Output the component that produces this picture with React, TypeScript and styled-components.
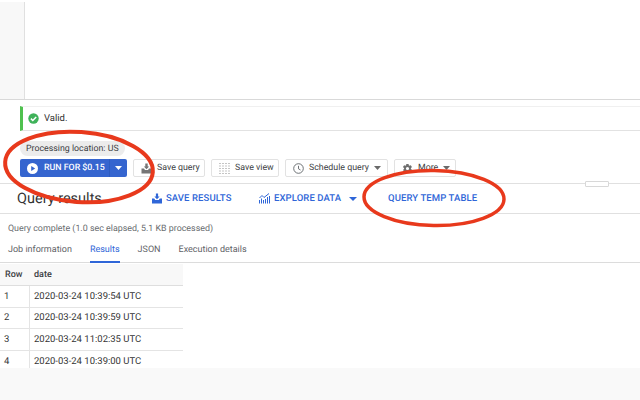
import React from 'react';
import styled, { createGlobalStyle } from 'styled-components';

const Global = createGlobalStyle`
  html, body { margin: 0; padding: 0; background: #fff; }
  body {
    font-family: Roboto, "Liberation Sans", sans-serif;
    color: #3c4043;
    text-rendering: geometricPrecision;
  }
`;

const Page = styled.div`
  position: relative;
  width: 640px;
  height: 400px;
  overflow: hidden;
  background: #fff;
  display: flex;
  flex-direction: column;
`;

const Editor = styled.div`
  height: 100px;
  flex: none;
  box-sizing: border-box;
  border-bottom: 1px solid #d9d9d9;
  display: flex;
  padding-top: 2px;
`;

const Gutter = styled.div`
  width: 24px;
  background: #f8f8f8;
  border-right: 1px solid #e0e0e0;
`;

const ValidBar = styled.div`
  margin: 6px 0 0 20px;
  height: 25px;
  box-sizing: border-box;
  flex: none;
  display: flex;
  align-items: center;
  gap: 5px;
  padding-left: 5px;
  border-left: 3px solid #4fc14f;
  border-top: 1px solid #f0f0f0;
  border-bottom: 1px solid #e2e2e2;
  font-size: 9.5px;
  color: #333;
`;

const Chip = styled.div`
  margin: 10px 0 0 20px;
  width: 105px;
  height: 15px;
  flex: none;
  box-sizing: border-box;
  padding-left: 6px;
  border-radius: 8px;
  background: #ececec;
  font-size: 8.8px;
  line-height: 16px;
  color: #3c4043;
  white-space: nowrap;
`;

const Toolbar = styled.div`
  margin: 3px 0 0 20px;
  height: 18px;
  flex: none;
  display: flex;
  gap: 6px;
`;

const RunButton = styled.div`
  width: 107px;
  flex: none;
  display: flex;
  align-items: center;
  background: #3565cf;
  border-radius: 2px;
  color: #fff;
  font-size: 8.8px;
  font-weight: 500;
`;

const RunLabel = styled.div`
  width: 90px;
  height: 100%;
  box-sizing: border-box;
  display: flex;
  align-items: center;
  gap: 6px;
  padding-left: 7px;
  border-right: 1px solid #2d5cc0;
  white-space: nowrap;
`;

const RunCaret = styled.div`
  flex: 1;
  display: flex;
  justify-content: center;
`;

const ToolButton = styled.div<{ $w: number }>`
  width: ${p => p.$w}px;
  flex: none;
  box-sizing: border-box;
  display: flex;
  align-items: center;
  gap: 5px;
  padding-left: 7px;
  border: 1px solid #e2e2e2;
  border-radius: 2px;
  font-size: 8.8px;
  color: #3c4043;
  white-space: nowrap;
`;

const ResultsBar = styled.div`
  position: relative;
  margin-top: 6px;
  height: 31px;
  flex: none;
  box-sizing: border-box;
  border-top: 1px solid #e0e0e0;
  border-bottom: 1px solid #e0e0e0;
  display: flex;
  align-items: center;
  padding-left: 17px;
`;

const Handle = styled.div`
  position: absolute;
  left: 585px;
  top: -3px;
  width: 22px;
  height: 4px;
  border: 1px solid #d8d8d8;
  border-radius: 1px;
  background: #fff;
`;

const Title = styled.div`
  width: 135px;
  flex: none;
  font-size: 14.5px;
  color: #333;
  white-space: nowrap;
`;

const ActionLink = styled.div<{ $w: number }>`
  width: ${p => p.$w}px;
  flex: none;
  display: flex;
  align-items: center;
  gap: 4px;
  color: #2f66d8;
  font-size: 9.5px;
  font-weight: 500;
  letter-spacing: 0.1px;
  white-space: nowrap;
`;

const ExploreCaret = styled.span`
  display: flex;
  margin-left: 4px;
`;

const Status = styled.div`
  margin: 10px 0 0 8px;
  flex: none;
  height: 11px;
  font-size: 8.88px;
  line-height: 11px;
  color: #6a6d70;
`;

const Tabs = styled.div`
  margin-top: 6px;
  height: 22px;
  flex: none;
  box-sizing: border-box;
  border-bottom: 1px solid #dcdcdc;
  display: flex;
  gap: 18px;
  padding-left: 8px;
`;

const Tab = styled.div<{ $active?: boolean }>`
  height: 22px;
  box-sizing: border-box;
  padding-top: 3px;
  font-size: 9px;
  line-height: 12px;
  color: ${p => (p.$active ? '#2f66d8' : '#5f6368')};
  border-bottom: ${p => (p.$active ? '2px solid #2f66d8' : 'none')};
`;

const Table = styled.div`
  margin-top: 1px;
  width: 183px;
  flex: none;
`;

const HeadRow = styled.div`
  height: 22px;
  box-sizing: border-box;
  display: grid;
  grid-template-columns: 29px 1fr;
  align-items: center;
  background: #f8f8f8;
  border-bottom: 1px solid #dedede;
  font-size: 9px;
  font-weight: 500;
  color: #3c4043;
`;

const HeadCell = styled.div`
  padding-left: 5px;
`;

const Row = styled.div`
  height: 21.6px;
  box-sizing: border-box;
  display: grid;
  grid-template-columns: 29px 1fr;
  border-bottom: 1px solid #e4e4e4;
  font-size: 9.5px;
  color: #333;
`;

const Cell = styled.div`
  display: flex;
  align-items: center;
  padding-left: 4px;
  & + & {
    border-left: 1px solid #e4e4e4;
  }
`;

const Footer = styled.div`
  position: absolute;
  left: 0;
  right: 0;
  top: 368px;
  bottom: 0;
  background: #f9f9f9;
`;

const Marks = styled.svg`
  position: absolute;
  left: 0;
  top: 0;
  width: 640px;
  height: 400px;
  pointer-events: none;
`;

const Caret = ({ color, w = 7 }: { color: string; w?: number }) => (
  <svg width={w} height="4" viewBox="0 0 7 4" preserveAspectRatio="none" style={{ flex: 'none' }}>
    <path d="M0 0h7L3.5 4z" fill={color} />
  </svg>
);

const rows = [
  ['1', '2020-03-24 10:39:54 UTC'],
  ['2', '2020-03-24 10:39:59 UTC'],
  ['3', '2020-03-24 11:02:35 UTC'],
  ['4', '2020-03-24 10:39:00 UTC'],
];

export default function App() {
  return (
    <Page>
      <Global />
      <Editor>
        <Gutter />
      </Editor>
      <ValidBar>
        <svg width="11" height="11" viewBox="0 0 11 11">
          <circle cx="5.5" cy="5.5" r="5.2" fill="#3fb25a" />
          <path d="M2.9 5.6l1.9 1.9 3.4-3.6" fill="none" stroke="#fff" strokeWidth="1.5" />
        </svg>
        Valid.
      </ValidBar>
      <Chip>Processing location: US</Chip>
      <Toolbar>
        <RunButton>
          <RunLabel>
            <svg width="11" height="11" viewBox="0 0 11 11" style={{ flex: 'none' }}>
              <circle cx="5.5" cy="5.5" r="5.5" fill="#fff" />
              <path d="M4.2 3v5l4-2.500z" fill="#3565cf" />
            </svg>
            RUN FOR $0.15
          </RunLabel>
          <RunCaret>
            <Caret color="#fff" />
          </RunCaret>
        </RunButton>
        <ToolButton $w={72}>
          <svg width="11" height="11" viewBox="0 0 11 11" style={{ flex: 'none' }}>
            <path d="M0.500 5.500h2.500l1 1.500h3l1-1.500h2.500v5h-10z" fill="#757575" />
            <path d="M4.300 0.500h2.400v3h1.500l-2.700 2.800-2.700-2.800h1.500z" fill="#757575" />
          </svg>
          Save query
        </ToolButton>
        <ToolButton $w={68}>
          <svg width="11" height="11" viewBox="0 0 11 11" style={{ flex: 'none' }}>
            <g fill="#8a8a8a">
              {[0, 2.5, 5, 7.5, 10].map(y =>
                [0.5, 3.5, 6.5, 9.500].map(x => <rect key={`${x}-${y}`} x={x} y={y} width="1" height="1" />),
              )}
            </g>
          </svg>
          Save view
        </ToolButton>
        <ToolButton $w={103}>
          <svg width="11" height="11" viewBox="0 0 11 11" style={{ flex: 'none' }}>
            <circle cx="5.500" cy="5.500" r="4.800" fill="none" stroke="#5f6368" strokeWidth="0.900" />
            <path d="M5.500 2.800v3l2 1.200" fill="none" stroke="#5f6368" strokeWidth="0.900" />
          </svg>
          Schedule query
          <Caret color="#6a6a6a" />
        </ToolButton>
        <ToolButton $w={62}>
          <svg width="11" height="11" viewBox="0 0 24 24" style={{ flex: 'none' }}>
            <path
              fill="#6f6f6f"
              d="M19.400 13c.1-.3.100-.7.100-1s0-.7-.1-1l2.100-1.600c.2-.2.200-.4.100-.6l-2-3.500c-.1-.2-.4-.3-.6-.2l-2.500 1c-.5-.4-1.100-.7-1.700-1l-.4-2.700c0-.2-.2-.4-.5-.4h-4c-.2 0-.4.200-.5.400l-.4 2.700c-.6.200-1.100.6-1.700 1l-2.500-1c-.2-.1-.5 0-.6.200l-2 3.500c-.1.200-.1.500.1.600L4.600 11c-.1.300-.1.700-.1 1s0 .7.100 1l-2.100 1.600c-.2.200-.2.400-.1.600l2 3.500c.1.200.4.300.6.200l2.500-1c.5.400 1.100.7 1.700 1l.4 2.700c0 .2.200.4.500.4h4c.2 0 .4-.2.500-.4l.4-2.700c.6-.2 1.100-.6 1.700-1l2.500 1c.2.100.5 0 .6-.2l2-3.500c.1-.2.100-.5-.1-.6zM12 15.500a3.500 3.500 0 1 1 0-7 3.500 3.500 0 0 1 0 7z"
            />
          </svg>
          More
          <Caret color="#6a6a6a" />
        </ToolButton>
      </Toolbar>
      <ResultsBar>
        <Handle />
        <Title>Query results</Title>
        <ActionLink $w={107}>
          <svg width="10" height="11" viewBox="0 0 10 11" style={{ flex: 'none' }}>
            <path d="M0 5.500h2.200l1 1.500h3.600l1-1.500H10v5H0z" fill="#2f66d8" />
            <path d="M3.900 0.500h2.200v3h1.500L5 6.200 2.400 3.500h1.500z" fill="#2f66d8" />
          </svg>
          SAVE RESULTS
        </ActionLink>
        <ActionLink $w={129}>
          <svg width="11" height="11" viewBox="0 0 11 11" style={{ flex: 'none' }}>
            <path d="M0.500 10.500V7M2.500 10.500V5.500M4.500 10.500V7M6.500 10.500V6M8.500 10.500V4M10.500 10.500V3" stroke="#2f66d8" strokeWidth="1" />
            <path d="M0.500 5L3 2.500 5 4.500 10 0.500" fill="none" stroke="#2f66d8" strokeWidth="1" />
          </svg>
          EXPLORE DATA
          <ExploreCaret>
            <Caret color="#2f66d8" w={8} />
          </ExploreCaret>
        </ActionLink>
        <ActionLink $w={100}>QUERY TEMP TABLE</ActionLink>
      </ResultsBar>
      <Status>Query complete (1.0 sec elapsed, 5.1 KB processed)</Status>
      <Tabs>
        <Tab>Job information</Tab>
        <Tab $active>Results</Tab>
        <Tab>JSON</Tab>
        <Tab>Execution details</Tab>
      </Tabs>
      <Table>
        <HeadRow>
          <HeadCell>Row</HeadCell>
          <HeadCell>date</HeadCell>
        </HeadRow>
        {rows.map(r => (
          <Row key={r[0]}>
            <Cell>{r[0]}</Cell>
            <Cell>{r[1]}</Cell>
          </Row>
        ))}
      </Table>
      <Footer />
      <Marks viewBox="0 0 640 400">
        <ellipse cx="79" cy="167" rx="74" ry="35" transform="rotate(4 79 167)" fill="none" stroke="#e8391c" strokeWidth="4" />
        <ellipse cx="434" cy="198" rx="70" ry="27.500" transform="rotate(1 434 198)" fill="none" stroke="#e8391c" strokeWidth="3.500" />
      </Marks>
    </Page>
  );
}
